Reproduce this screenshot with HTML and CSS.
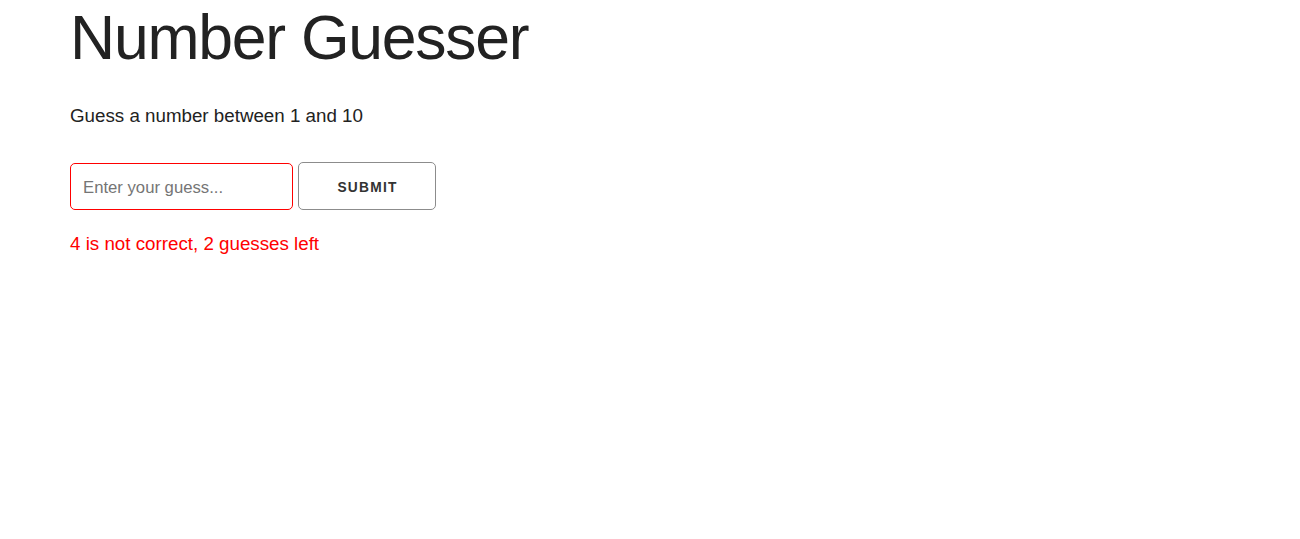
FILE: index.html
```html
<!DOCTYPE html>
<html lang="en">
<head>
<meta charset="utf-8">
<title>Number Guesser</title>
<link rel="stylesheet" href="styles.css">
</head>
<body>
  <div class="container">
    <h1 class="title">Number Guesser</h1>
    <p class="intro">Guess a number between 1 and 10</p>
    <div class="guess-form">
      <input class="guess-input" type="number" placeholder="Enter your guess...">
      <button class="submit-btn" type="button">Submit</button>
    </div>
    <p class="message">4 is not correct, 2 guesses left</p>
  </div>
</body>
</html>
```
FILE: styles.css
```css
html, body {
  margin: 0;
  padding: 0;
  background: #fff;
}

body {
  font-family: "Liberation Sans", Arial, Helvetica, sans-serif;
  font-size: 18.75px;
  line-height: 30px;
  color: #222;
}

.container {
  padding: 0 70px;
}

.title {
  margin: 0 0 26px;
  font-size: 62.5px;
  line-height: 75px;
  font-weight: 400;
  letter-spacing: -1.25px;
  color: #222;
}

.intro {
  margin: 0 0 31px;
}

.guess-form {
  display: flex;
  align-items: flex-end;
  gap: 5px;
}

.guess-input {
  box-sizing: border-box;
  width: 223px;
  height: 47px;
  margin: 0;
  padding: 2px 12px 0;
  border: 1px solid #f00;
  border-radius: 5px;
  font-family: inherit;
  font-size: 16.7px;
  color: #222;
  background: #fff;
  outline: none;
}

.guess-input::placeholder {
  color: #757575;
}

.submit-btn {
  box-sizing: border-box;
  width: 138px;
  height: 48px;
  margin: 0;
  padding: 2px 0 0 1px;
  border: 1px solid #8c8c8c;
  border-radius: 5px;
  background: transparent;
  font-family: inherit;
  font-size: 13.75px;
  font-weight: 700;
  letter-spacing: 1.25px;
  text-transform: uppercase;
  color: #333;
  cursor: pointer;
}

.message {
  margin: 19px 0 0;
  color: #f00;
}
```
